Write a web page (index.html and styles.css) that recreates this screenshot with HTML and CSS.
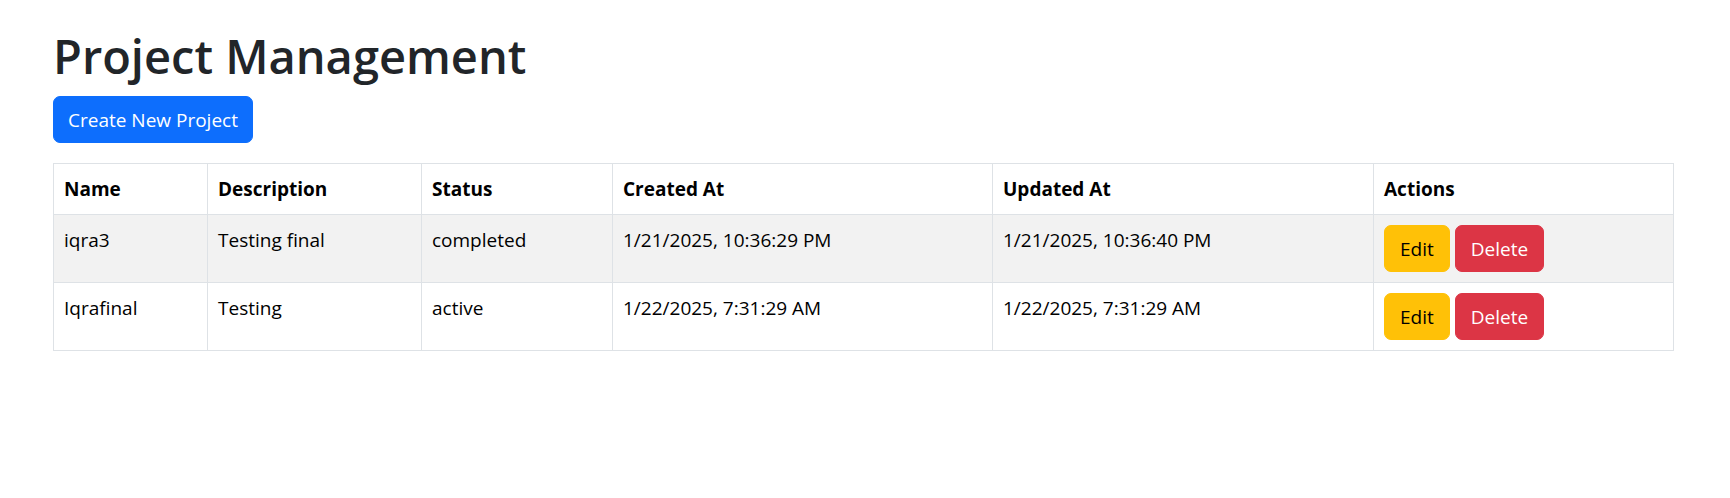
FILE: index.html
```html
<!DOCTYPE html>
<html lang="en">
<head>
<meta charset="utf-8">
<title>Project Management</title>
<link rel="stylesheet" href="styles.css">
</head>
<body>
<div class="page">
  <h1 class="title">Project Management</h1>
  <button class="btn btn-primary">Create New Project</button>
  <table class="grid">
    <colgroup>
      <col class="c-name">
      <col class="c-desc">
      <col class="c-status">
      <col class="c-created">
      <col class="c-updated">
      <col class="c-actions">
    </colgroup>
    <thead>
      <tr>
        <th>Name</th>
        <th>Description</th>
        <th>Status</th>
        <th>Created At</th>
        <th>Updated At</th>
        <th>Actions</th>
      </tr>
    </thead>
    <tbody>
      <tr class="striped">
        <td>iqra3</td>
        <td>Testing final</td>
        <td>completed</td>
        <td>1/21/2025, 10:36:29 PM</td>
        <td>1/21/2025, 10:36:40 PM</td>
        <td><div class="actions"><button class="btn btn-warning">Edit</button><button class="btn btn-danger">Delete</button></div></td>
      </tr>
      <tr>
        <td>Iqrafinal</td>
        <td>Testing</td>
        <td>active</td>
        <td>1/22/2025, 7:31:29 AM</td>
        <td>1/22/2025, 7:31:29 AM</td>
        <td><div class="actions"><button class="btn btn-warning">Edit</button><button class="btn btn-danger">Delete</button></div></td>
      </tr>
    </tbody>
  </table>
</div>
</body>
</html>
```
FILE: styles.css
```css
* { box-sizing: border-box; }
body {
  margin: 0;
  font-family: "Open Sans", "Noto Sans", sans-serif;
  color: #212529;
  background: #fff;
}
.page {
  padding: 28px 0 0 53px;
  width: 1673px;
}
.title {
  margin: 0 0 12px;
  font-size: 47px;
  font-weight: 600;
  line-height: 1.2;
  color: #212529;
}
.btn {
  display: inline-block;
  font-family: inherit;
  font-size: 19px;
  line-height: 30px;
  padding: 7px 14px;
  border: 1px solid transparent;
  border-radius: 7px;
  cursor: pointer;
  height: 47px;
}
.btn-primary { background: #0d6efd; border-color: #0d6efd; color: #fff; }
.btn-warning { background: #ffc107; border-color: #ffc107; color: #000; padding: 7px 15px; }
.btn-danger { background: #dc3545; border-color: #dc3545; color: #fff; padding: 7px 15px; }
.grid {
  margin-top: 20px;
  width: 1620px;
  table-layout: fixed;
  border-collapse: collapse;
  color: #000;
  font-size: 19px;
  line-height: 30px;
}
.c-name { width: 154px; }
.c-desc { width: 214px; }
.c-status { width: 191px; }
.c-created { width: 380px; }
.c-updated { width: 381px; }
.c-actions { width: 300px; }
.grid th, .grid td {
  border: 1px solid #dee2e6;
  padding: 10px 10px;
  text-align: left;
  vertical-align: top;
}
.grid th { font-weight: 700; }
.grid td { font-weight: 400; }
.striped td { background: #f2f2f2; }
.actions { display: flex; gap: 5px; }
```
